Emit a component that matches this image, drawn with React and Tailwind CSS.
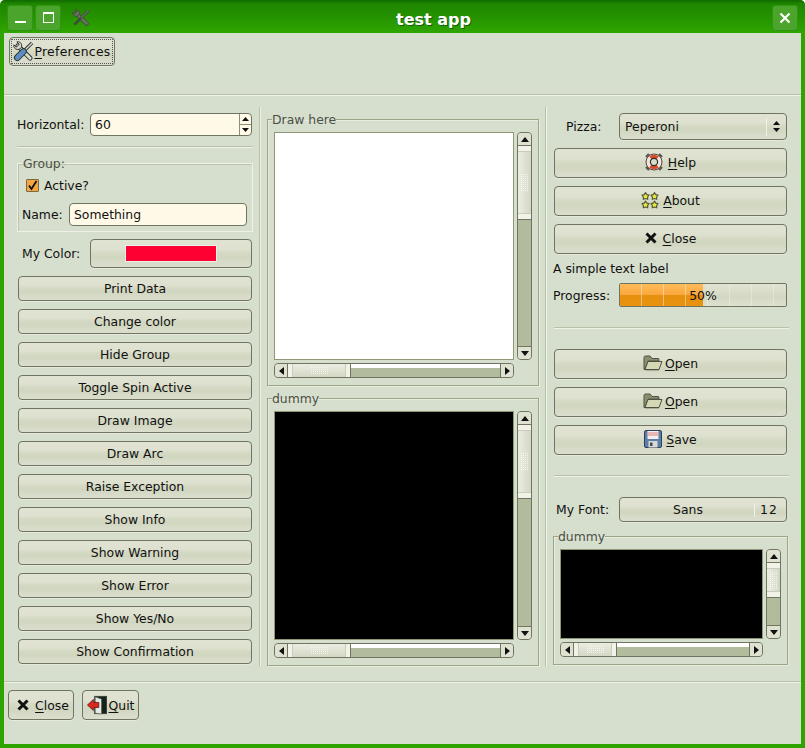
import React from 'react';

const btnBg = 'bg-[linear-gradient(180deg,#e0e3d2_0%,#dee1cf_35%,#d6dac6_45%,#d0d6bf_65%,#d6dac7_80%,#dbdecd_100%)]';

function XIcon({ className = 'w-[12px] h-[12px]' }) {
    return (
        <svg viewBox="0 0 12 12" className={className}>
            <path d="M1.5 1.5 L10.5 10.5 M10.5 1.5 L1.5 10.5" stroke="#111" strokeWidth="3" />
        </svg>
    );
}

function ToolsIcon({ gray = false, className = 'w-[21px] h-[21px]' }) {
    const metal = gray ? '#6d7566' : '#d9dbd3';
    const edge = gray ? '#3f4a3a' : '#2e322a';
    return (
        <svg viewBox="0 0 22 22" className={className}>
            <path d="M5 5 L18 18" stroke={edge} strokeWidth="5" strokeLinecap="round" />
            <path d="M5 5 L18 18" stroke={metal} strokeWidth="3" strokeLinecap="round" />
            <path d="M1 4 L3.5 6.5 L6.5 3.5 L4 1 Q8 0 9 4 Q9.5 6 8 8 L5 9 Q0 8 1 4 Z" fill={metal} stroke={edge} strokeWidth="1" />
            <path d="M20 2 L11 11" stroke={edge} strokeWidth="3.4" />
            <path d="M20 2 L11 11" stroke={metal} strokeWidth="1.4" />
            {gray ? (
                <path d="M11 11 L3 19" stroke={edge} strokeWidth="3" />
            ) : (
                <>
                    <path d="M11 11 L4.5 17.5" stroke={edge} strokeWidth="7" strokeLinecap="round" />
                    <path d="M11 11 L4.5 17.5" stroke="#5c8cc4" strokeWidth="5" strokeLinecap="round" />
                </>
            )}
        </svg>
    );
}

function HelpIcon() {
    return (
        <svg viewBox="0 0 18 18" className="w-[18px] h-[18px]">
            <path d="M1 4 L4 1 M17 4 L14 1 M1 14 L4 17 M17 14 L14 17" stroke="#55584f" strokeWidth="2.4" />
            <circle cx="9" cy="9" r="8" fill="#ece6de" stroke="#55443e" strokeWidth="1" />
            <path d="M4.2 3.4 A7.4 7.4 0 0 1 13.8 3.4 L11.2 6.4 A3.6 3.6 0 0 0 6.8 6.4 Z" fill="#dc4a2c" />
            <path d="M4.2 14.6 A7.4 7.4 0 0 0 13.8 14.6 L11.2 11.6 A3.6 3.6 0 0 1 6.8 11.6 Z" fill="#dc4a2c" />
            <circle cx="9" cy="9" r="3.6" fill="#d8dcc9" stroke="#2d2d2a" strokeWidth="1.2" />
        </svg>
    );
}

function Flower({ x, y }) {
    return (
        <g transform={`translate(${x} ${y})`}>
            <path d="M4 0.7 L5.3 2.6 L7.5 3.2 L6.1 5 L6.2 7.3 L4 6.5 L1.8 7.3 L1.9 5 L0.5 3.2 L2.7 2.6 Z" fill="#e8ea38" stroke="#55593a" strokeWidth="1.2" strokeLinejoin="round" />
        </g>
    );
}

function AboutIcon() {
    return (
        <svg viewBox="0 0 18 18" className="w-[18px] h-[18px]">
            <Flower x={0.5} y={1} />
            <Flower x={9.5} y={1} />
            <Flower x={0.5} y={9.5} />
            <Flower x={9.5} y={9.5} />
        </svg>
    );
}

function FolderIcon() {
    return (
        <svg viewBox="0 0 20 16" className="w-[20px] h-[16px]">
            <path d="M1 14.5 V2.5 Q1 1 2.5 1 H7 L9 3.5 H15 Q16 3.5 16 4.5 V6 H5 L2 14.5 Z" fill="#8b8f72" stroke="#4e5241" />
            <path d="M2 14.5 L5 6.5 H19 L16 14.5 Z" fill="#d4d8b4" stroke="#4e5241" strokeLinejoin="round" />
            <path d="M2.5 15.5 H16" stroke="#a9ad9a" />
        </svg>
    );
}

function SaveIcon() {
    return (
        <svg viewBox="0 0 18 18" className="w-[18px] h-[18px]">
            <rect x="0.5" y="0.5" width="17" height="17" rx="1.5" fill="#5a7ea8" stroke="#2f3f55" />
            <rect x="3.5" y="1" width="11" height="8" fill="#f4eeee" />
            <path d="M3.5 3 H14.5 M3.5 5 H14.5" stroke="#d9807a" />
            <rect x="4.5" y="11" width="9" height="6.5" fill="#d8dad6" />
            <rect x="6" y="12.5" width="2.5" height="3.5" fill="#44484a" />
        </svg>
    );
}

function QuitIcon() {
    return (
        <svg viewBox="0 0 22 22" className="w-[20px] h-[20px]">
            <rect x="8.5" y="1.5" width="13" height="19" fill="#13241b" stroke="#3a3f38" />
            <path d="M9 2 L16 4.5 V21 L9 20 Z" fill="#e4e9e1" stroke="#44483f" strokeWidth="0.6" />
            <path d="M0.5 11 L7 5 V8.2 H13 V13.8 H7 V17 Z" fill="#d8281c" stroke="#6d1710" strokeWidth="0.9" />
        </svg>
    );
}

function Mnemonic({ first, rest }) {
    return (
        <span>
            <span className="underline underline-offset-2">{first}</span>
            {rest}
        </span>
    );
}

function GtkButton({ className = '', children }) {
    return (
        <div className={`flex items-center justify-center rounded-[4px] border border-[#6f7560] text-[#111] shadow-[0_1px_0_#e6e9dc] ${btnBg} ${className}`}>
            {children}
        </div>
    );
}

function SpinArrows() {
    return (
        <div className="flex h-full w-[12px] flex-col items-center justify-center gap-[3px] border-l border-[#8a8f78]">
            <svg viewBox="0 0 7 4" className="h-[4px] w-[7px]"><path d="M3.5 0 L7 4 H0 Z" fill="#111" /></svg>
            <div className="h-px w-full bg-[#8a8f78]" />
            <svg viewBox="0 0 7 4" className="h-[4px] w-[7px]"><path d="M3.5 4 L7 0 H0 Z" fill="#111" /></svg>
        </div>
    );
}

function Grip({ cols, rows }) {
    return (
        <div className="grid gap-px" style={{ gridTemplateColumns: `repeat(${cols}, 1px)` }}>
            {Array.from({ length: cols * rows }).map((_, i) => (
                <div key={i} className="h-px w-px bg-[#f7f7f2]" />
            ))}
        </div>
    );
}

function Arrow({ dir }) {
    const paths = {
        up: 'M4 0 L8 5 H0 Z',
        down: 'M4 5 L8 0 H0 Z',
        left: 'M0 4 L5 0 V8 Z',
        right: 'M5 4 L0 0 V8 Z',
    };
    const box = dir === 'up' || dir === 'down' ? '0 0 8 5' : '0 0 5 8';
    const size = dir === 'up' || dir === 'down' ? 'w-[8px] h-[5px]' : 'w-[5px] h-[8px]';
    return (
        <svg viewBox={box} className={size}>
            <path d={paths[dir]} fill="#111" />
        </svg>
    );
}

function VScrollbar({ thumb, className = '' }) {
    return (
        <div className={`flex w-[15px] flex-col overflow-hidden rounded-[4px] border border-[#6f7560] bg-[#b2bc9c] ${className}`}>
            <div className="flex h-[13px] shrink-0 items-center justify-center border-b border-[#6f7560] bg-[#dfe2d1]">
                <Arrow dir="up" />
            </div>
            <div className="flex shrink-0 flex-col items-center border-b border-[#6f7560] bg-[linear-gradient(90deg,#ecede2,#d3d7c3)]" style={{ height: thumb }}>
                <div className="h-[6px] w-full shrink-0 border-b border-[#c9cdbb] bg-[#f2f2e9]" />
                <div className="flex flex-1 items-center justify-center">
                    <Grip cols={4} rows={9} />
                </div>
                <div className="h-[6px] w-full shrink-0 border-t border-[#c9cdbb] bg-[#f2f2e9]" />
            </div>
            <div className="flex-1" />
            <div className="flex h-[13px] shrink-0 items-center justify-center border-t border-[#6f7560] bg-[#dfe2d1]">
                <Arrow dir="down" />
            </div>
        </div>
    );
}

function HScrollbar({ thumb, width, className = '' }) {
    return (
        <div className={`flex h-[15px] overflow-hidden rounded-[4px] border border-[#6f7560] bg-[#b2bc9c] ${className}`} style={{ width }}>
            <div className="flex w-[13px] shrink-0 items-center justify-center border-r border-[#6f7560] bg-[#dfe2d1]">
                <Arrow dir="left" />
            </div>
            <div className="flex shrink-0 border-r border-[#6f7560] bg-[linear-gradient(180deg,#ecede2,#d3d7c3)]" style={{ width: thumb }}>
                <div className="w-[5px] shrink-0 border-r border-[#c9cdbb] bg-[#f2f2e9]" />
                <div className="flex flex-1 items-center justify-center">
                    <Grip cols={9} rows={4} />
                </div>
                <div className="w-[5px] shrink-0 border-l border-[#c9cdbb] bg-[#f2f2e9]" />
            </div>
            <div className="flex flex-1 flex-col">
                <div className="h-[4px] bg-white" />
                <div className="flex-1" />
            </div>
            <div className="flex w-[13px] shrink-0 items-center justify-center border-l border-[#6f7560] bg-[#dfe2d1]">
                <Arrow dir="right" />
            </div>
        </div>
    );
}

function CanvasFrame({ title, black, className = '', canvasW, canvasH, vThumb, hThumb }) {
    return (
        <fieldset className={`border border-[#9ca586] pl-[6px] shadow-[inset_1px_1px_0_#e8ecdf,1px_1px_0_#e8ecdf] ${className}`}>
            <legend className="ml-[-2px] text-[12.4px] leading-[13px] text-[#4c5046]">{title}</legend>
            <div className="mt-[6px] flex gap-[3px]">
                <div className={`border border-[#8f9777] ${black ? 'bg-black' : 'bg-white'}`} style={{ width: canvasW, height: canvasH }} />
                <VScrollbar thumb={vThumb} />
            </div>
            <HScrollbar thumb={hThumb} width={canvasW} className="mt-[3px]" />
        </fieldset>
    );
}

const leftButtons = ['Print Data', 'Change color', 'Hide Group', 'Toggle Spin Active', 'Draw Image', 'Draw Arc', 'Raise Exception', 'Show Info', 'Show Warning', 'Show Error', 'Show Yes/No', 'Show Confirmation'];

function Separator({ className = '' }) {
    return <div className={`h-[2px] border-t border-[#b9c0a8] bg-[#eef1e6] ${className}`} />;
}

function WinButton({ children }) {
    return (
        <div className="flex h-[26px] w-[26px] items-center justify-center rounded-[3px] border border-[#2f9412] bg-[#4ba42c]">
            {children}
        </div>
    );
}

function LeftColumn() {
    return (
        <div className="w-[255px] shrink-0 pl-[13px] pt-[17px]">
            <div className="flex h-[23px] items-center">
                <span className="w-[73px]">Horizontal:</span>
                <div className="flex h-[23px] w-[162px] items-center rounded-[4px] border border-[#6f7560] bg-[#fffae7]">
                    <span className="flex-1 pl-[4px]">60</span>
                    <SpinArrows />
                </div>
            </div>
            <Separator className="mt-[10px] w-[236px]" />
            <fieldset className="mt-[9px] h-[75px] w-[236px] border border-[#eef1e6] pl-[4px] shadow-[inset_1px_1px_0_#bcc3ab]">
                <legend className="ml-[1px] text-[12.4px] leading-[13px] text-[#4c5046]">Group:</legend>
                <div className="flex h-[25px] items-center pl-[4px] pt-[5px]">
                    <div className="flex h-[13px] w-[13px] items-center justify-center rounded-[1px] border border-[#7d6a3f] bg-[#f4a641]">
                        <svg viewBox="0 0 11 11" className="h-[11px] w-[11px]"><path d="M2 5.5 L4.5 9 L9.5 1" fill="none" stroke="#111" strokeWidth="1.8" /></svg>
                    </div>
                    <span className="ml-[5px]">Active?</span>
                </div>
                <div className="mt-[8px] flex items-center">
                    <span className="w-[47px]">Name:</span>
                    <div className="flex h-[23px] w-[178px] items-center rounded-[4px] border border-[#6f7560] bg-[#fffae7] pl-[4px]">Something</div>
                </div>
            </fieldset>
            <div className="mt-[7px] flex h-[29px] items-center">
                <span className="w-[73px] pl-[5px]">My Color:</span>
                <GtkButton className="h-[29px] w-[162px]">
                    <div className="h-[17px] w-[92px] border border-[#f0f0ea] bg-[#ff0033]" />
                </GtkButton>
            </div>
            <div className="ml-px mt-[8px] flex w-[234px] flex-col gap-[8px]">
                {leftButtons.map((label) => (
                    <GtkButton key={label} className="h-[25px]">{label}</GtkButton>
                ))}
            </div>
        </div>
    );
}

function MiddleColumn() {
    return (
        <div className="w-[284px] shrink-0 pl-[6px] pt-[17px]">
            <CanvasFrame title="Draw here" canvasW={240} canvasH={228} vThumb={74} hThumb={63} className="h-[273px] w-[272px]" />
            <CanvasFrame title="dummy" black canvasW={240} canvasH={229} vThumb={74} hThumb={63} className="mt-[6px] h-[274px] w-[272px]" />
        </div>
    );
}

function RightColumn() {
    return (
        <div className="w-[255px] shrink-0 pl-[7px] pt-[17px]">
            <div className="flex h-[27px] items-center">
                <span className="w-[65px] pl-[12px]">Pizza:</span>
                <GtkButton className="h-[27px] w-[168px] !justify-start pl-[5px]">
                    <span className="flex-1">Peperoni</span>
                    <div className="flex h-[18px] w-[20px] flex-col items-center justify-center gap-[3px] border-l border-[#f0f1e8]">
                        <svg viewBox="0 0 7 4" className="h-[4px] w-[7px]"><path d="M3.5 0 L7 4 H0 Z" fill="#111" /></svg>
                        <svg viewBox="0 0 7 4" className="h-[4px] w-[7px]"><path d="M3.5 4 L7 0 H0 Z" fill="#111" /></svg>
                    </div>
                </GtkButton>
            </div>
            <div className="mt-[8px] flex w-[233px] flex-col gap-[8px]">
                <GtkButton className="h-[30px] gap-[5px] pb-[2px]"><HelpIcon /><Mnemonic first="H" rest="elp" /></GtkButton>
                <GtkButton className="h-[30px] gap-[4px] pb-[2px]"><AboutIcon /><Mnemonic first="A" rest="bout" /></GtkButton>
                <GtkButton className="h-[30px] gap-[6px] pb-[2px]"><XIcon /><Mnemonic first="C" rest="lose" /></GtkButton>
            </div>
            <div className="-ml-px mt-[7px] h-[16px] leading-[16px]">A simple text label</div>
            <div className="mt-[6px] flex h-[24px] items-center">
                <span className="-ml-px w-[66px]">Progress:</span>
                <div className="relative flex h-[24px] w-[168px] items-center justify-center overflow-hidden rounded-[2px] border border-[#6f7560] bg-[linear-gradient(180deg,#e0e3d2,#d3d8c2_60%,#dde0cf)]">
                    <div className="absolute left-0 top-0 h-full w-[83px] bg-[linear-gradient(180deg,#ffbb5c_0%,#f9a73b_50%,#e68f10_52%,#e8930f_100%)]" />
                    <div className="absolute inset-0 bg-[repeating-linear-gradient(90deg,transparent_0,transparent_21px,#f0eedd80_21px,#f0eedd80_22px)]" />
                    <span className="relative">50%</span>
                </div>
            </div>
            <Separator className="mt-[20px] w-[235px]" />
            <div className="mt-[20px] flex w-[233px] flex-col gap-[8px]">
                <GtkButton className="h-[30px] gap-[2px] pb-[2px]"><FolderIcon /><Mnemonic first="O" rest="pen" /></GtkButton>
                <GtkButton className="h-[30px] gap-[2px] pb-[2px]"><FolderIcon /><Mnemonic first="O" rest="pen" /></GtkButton>
                <GtkButton className="h-[30px] gap-[4px] pb-[2px]"><SaveIcon /><Mnemonic first="S" rest="ave" /></GtkButton>
            </div>
            <Separator className="mt-[20px] w-[235px]" />
            <div className="mt-[20px] flex h-[25px] items-center">
                <span className="w-[65px] pl-[2px]">My Font:</span>
                <GtkButton className="h-[25px] w-[168px]">
                    <span className="flex-1 pl-[2px] text-center">Sans</span>
                    <span className="w-[32px] border-l border-[#f0f1e8] pl-[5px] leading-[14px] tracking-[1px]">12</span>
                </GtkButton>
            </div>
            <CanvasFrame title="dummy" black canvasW={203} canvasH={90} vThumb={35} hThumb={43} className="-ml-px mt-[8px] h-[135px] w-[235px]" />
        </div>
    );
}

export default function App() {
    return (
        <div className="h-[748px] w-[805px] overflow-hidden rounded-t-[5px] bg-[#2ea400] font-['DejaVu_Sans',sans-serif] text-[12.4px] leading-[15px] text-[#111]">
            <div className="flex h-[33px] items-center bg-[linear-gradient(180deg,#0f6a00_0%,#1f8700_12%,#238e00_40%,#2fa600_100%)] pl-[7px] pr-[7px] pt-[2px]">
                <div className="flex w-[88px] shrink-0 items-center gap-[2px]">
                    <WinButton>
                        <div className="mt-[9px] h-[2px] w-[11px] bg-white" />
                    </WinButton>
                    <WinButton>
                        <div className="h-[11px] w-[11px] border border-t-2 border-white" />
                    </WinButton>
                    <ToolsIcon gray className="ml-[9px] h-[18px] w-[18px]" />
                </div>
                <span className="flex-1 pt-[3px] text-center text-[16px] font-bold text-white [text-shadow:1px_1px_0_#14600a]">test app</span>
                <WinButton>
                    <svg viewBox="0 0 12 12" className="h-[12px] w-[12px]"><path d="M1.5 1.5 L10.5 10.5 M10.5 1.5 L1.5 10.5" stroke="#fff" strokeWidth="2.2" /></svg>
                </WinButton>
            </div>

            <div className="mx-[4px] flex h-[711px] flex-col bg-[#d6decd]">
                <div className="h-[61px] shrink-0 pl-[5px] pt-[4px]">
                    <GtkButton className="h-[29px] w-[106px]">
                        <div className="flex h-[25px] w-[102px] items-center justify-center border border-dotted border-[#555]">
                            <ToolsIcon />
                            <span className="tracking-[0.3px]"><Mnemonic first="P" rest="references" /></span>
                        </div>
                    </GtkButton>
                </div>
                <Separator className="shrink-0" />
                <div className="flex h-[585px] shrink-0">
                    <LeftColumn />
                    <div className="mt-[11px] h-[559px] w-[2px] shrink-0 border-l border-[#b9c0a8] bg-[#eef1e6]" />
                    <MiddleColumn />
                    <div className="mt-[11px] h-[559px] w-[2px] shrink-0 border-l border-[#b9c0a8] bg-[#eef1e6]" />
                    <RightColumn />
                </div>
                <Separator className="shrink-0" />
                <div className="flex gap-[8px] pl-[4px] pt-[7px]">
                    <GtkButton className="h-[30px] w-[66px] gap-[6px] pl-[4px]"><XIcon /><Mnemonic first="C" rest="lose" /></GtkButton>
                    <GtkButton className="h-[30px] w-[57px] gap-[2px]"><QuitIcon /><Mnemonic first="Q" rest="uit" /></GtkButton>
                </div>
            </div>
        </div>
    );
}
